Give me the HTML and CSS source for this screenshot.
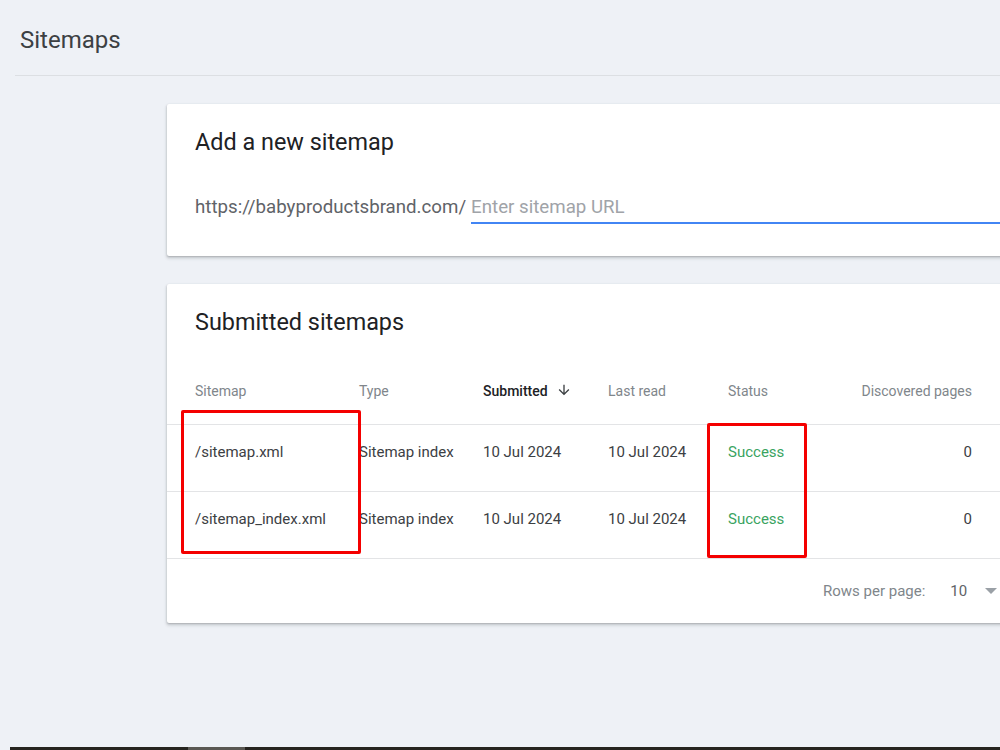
FILE: index.html
```html
<!DOCTYPE html>
<html lang="en">
<head>
<meta charset="UTF-8">
<title>Sitemaps</title>
<link rel="stylesheet" href="styles.css">
</head>
<body>
    <header class="page-header">
        <h1>Sitemaps</h1>
    </header>

    <main class="content">
        <!-- Add a new sitemap -->
        <section class="card add-card">
            <h2>Add a new sitemap</h2>
            <div class="url-row">
                <span class="url-prefix">https://babyproductsbrand.com/</span>
                <input class="url-input" type="text" placeholder="Enter sitemap URL">
            </div>
        </section>

        <!-- Submitted sitemaps -->
        <section class="card list-card">
            <h2>Submitted sitemaps</h2>
            <div class="row head">
                <span>Sitemap</span>
                <span>Type</span>
                <span class="sorted">Submitted
                    <svg viewBox="0 0 24 24" width="16" height="16"><path d="M20 12l-1.41-1.41L13 16.17V4h-2v12.17l-5.58-5.59L4 12l8 8 8-8z"/></svg>
                </span>
                <span>Last read</span>
                <span>Status</span>
                <span class="num">Discovered pages</span>
            </div>
            <div class="row">
                <span>/sitemap.xml</span>
                <span>Sitemap index</span>
                <span>10 Jul 2024</span>
                <span>10 Jul 2024</span>
                <span class="ok">Success</span>
                <span class="num">0</span>
            </div>
            <div class="row">
                <span>/sitemap_index.xml</span>
                <span>Sitemap index</span>
                <span>10 Jul 2024</span>
                <span>10 Jul 2024</span>
                <span class="ok">Success</span>
                <span class="num">0</span>
            </div>
            <div class="pager">
                <span class="pager-label">Rows per page:</span>
                <span class="pager-value">10</span>
                <span class="pager-caret"></span>
            </div>

            <!-- marcas rojas encima de la tabla -->
            <div class="mark mark-name"></div>
            <div class="mark mark-status"></div>
        </section>
    </main>

    <div class="taskbar"><span class="taskbar-item"></span></div>
</body>
</html>
```

FILE: styles.css
```css
* {
    box-sizing: border-box;
}

html, body {
    height: 100%;
}

body {
    margin: 0;
    background-color: #eef1f6;
    font-family: Roboto, "Liberation Sans", Arial, sans-serif;
    color: #3c4043;
    overflow: hidden;
    display: flex;
    flex-direction: column;
}

/* Cabecera */
.page-header {
    height: 76px;
    margin-left: 15px;
    padding-left: 5px;
    border-bottom: 1px solid #dcdfe3;
    display: flex;
    align-items: center;
}

.page-header h1 {
    margin: 5px 0 0 0;
    font-size: 24px;
    font-weight: 400;
    color: #3c4043;
}

.content {
    padding: 28px 0 0 167px;
    display: flex;
    flex-direction: column;
    gap: 28px;
}

/* Tarjetas */
.card {
    width: 880px;
    background-color: #fff;
    border-radius: 2px;
    box-shadow: 0 1px 2px rgba(60, 64, 67, 0.3), 0 2px 3px 1px rgba(60, 64, 67, 0.12);
}

.card h2 {
    margin: 0;
    padding: 24px 28px 0 28px;
    font-size: 23.4px;
    line-height: 28px;
    font-weight: 400;
    color: #202124;
}

.add-card {
    height: 152px;
}

.url-row {
    display: flex;
    align-items: flex-end;
    padding: 36px 0 0 28px;
}

.url-prefix {
    font-size: 18.7px;
    line-height: 30px;
    color: #5f6368;
    padding-bottom: 2px;
    margin-right: 5px;
}

.url-input {
    flex: 1;
    border: none;
    border-bottom: 2px solid #4285f4;
    font-family: inherit;
    font-size: 18.7px;
    line-height: 30px;
    padding: 0;
    color: #202124;
    outline: none;
}

.url-input::placeholder {
    color: #a0a3a8;
}

/* Tabla */
.list-card {
    position: relative;
    height: 339px;
}

.list-card h2 {
    margin-bottom: 22px;
}

.row {
    display: grid;
    grid-template-columns: 164px 124px 125px 120px 110px 134px 1fr;
    align-items: center;
    height: 67px;
    padding-left: 28px;
    padding-bottom: 13px;
    border-bottom: 1px solid #e3e4e6;
    font-size: 15px;
    color: #3c4043;
}

.row.head {
    height: 67px;
    padding-top: 0;
    padding-bottom: 0;
    font-size: 14px;
    color: #80868b;
}

.row .num {
    text-align: right;
}

.sorted {
    display: flex;
    align-items: center;
    gap: 8px;
    font-weight: 500;
    color: #202124;
}

.sorted svg {
    fill: #3c4043;
    margin-top: -3px;
}

.ok {
    color: #3aa45f;
}

/* Paginador */
.pager {
    display: flex;
    align-items: center;
    height: 65px;
    padding-left: 656px;
    padding-bottom: 2px;
    font-size: 15px;
    color: #80868b;
}

.pager-value {
    margin-left: 25px;
    font-size: 15px;
    color: #5f6368;
}

.pager-caret {
    margin-left: 18px;
    margin-top: 1px;
    width: 0;
    height: 0;
    border-left: 6px solid transparent;
    border-right: 6px solid transparent;
    border-top: 6px solid #9aa0a6;
}

/* Marcas rojas */
.mark {
    position: absolute;
    border: 3px solid #f40000;
    border-radius: 2px;
}

.mark-name {
    left: 14px;
    top: 126px;
    width: 180px;
    height: 144px;
}

.mark-status {
    left: 540px;
    top: 139px;
    width: 100px;
    height: 135px;
}

/* Barra inferior */
.taskbar {
    margin-top: auto;
    margin-left: 10px;
    height: 3px;
    background-color: #26241f;
    display: flex;
}

.taskbar-item {
    margin-left: 178px;
    width: 57px;
    background-color: #5a5853;
}
```
